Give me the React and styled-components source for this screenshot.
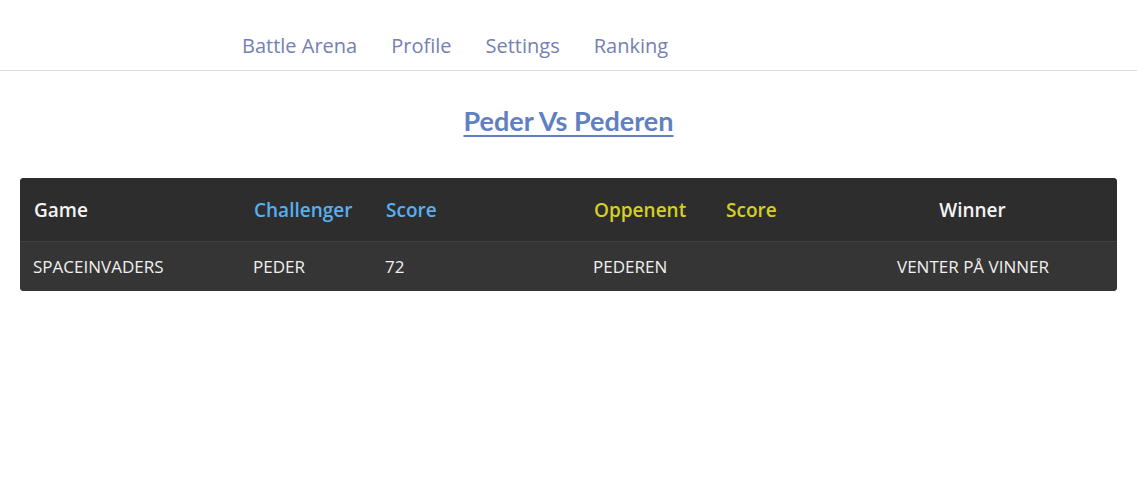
import React from "react";
import styled, { createGlobalStyle } from "styled-components";

const Global = createGlobalStyle`
  html, body { margin: 0; padding: 0; background: #fff; }
  body { font-family: "Open Sans", "Liberation Sans", sans-serif; }
`;

const NavBar = styled.nav`
  display: flex;
  align-items: center;
  height: 71px;
  padding: 0 0 0 225px;
  border-bottom: 1px solid #dcdcdc;
  box-sizing: border-box;
`;

const NavLink = styled.a`
  font-family: "Open Sans", sans-serif;
  font-size: 20px;
  color: #7580b3;
  padding: 0 17px;
  text-decoration: none;
  line-height: 24px;
  margin-top: 21px;
`;

const Title = styled.h1`
  margin: 35px 0 0;
  text-align: center;
  font-family: Lato, "Open Sans", sans-serif;
  font-weight: 700;
  font-size: 27px;
  line-height: 30px;
  color: #5f80c2;
  text-decoration: underline;
  text-decoration-thickness: 2px;
  text-underline-offset: 4px;
`;

const Card = styled.div`
  margin: 42px 20px 0;
  background: #333333;
  border-radius: 4px;
  overflow: hidden;
`;

const Table = styled.table`
  width: 100%;
  border-collapse: collapse;
  table-layout: fixed;
`;

const HeadRow = styled.tr`
  background: #2d2d2d;
  height: 63px;
  border-bottom: 1px solid #414141;
`;

const BodyRow = styled.tr`
  background: #353535;
  height: 50px;
`;

const Th = styled.th`
  font-family: "Open Sans", sans-serif;
  font-weight: 600;
  font-size: 19px;
  padding-top: 2px;
  text-align: ${(p) => (p.$center ? "center" : "left")};
  padding-left: ${(p) => (p.$center ? 0 : 14)}px;
  color: ${(p) =>
    p.$tone === "blue" ? "#58aff0" : p.$tone === "yellow" ? "#d6cf26" : "#f4f4f4"};
`;

const Td = styled.td`
  font-family: "Open Sans", sans-serif;
  font-size: 17px;
  color: #f0f0f0;
  text-transform: uppercase;
  text-align: ${(p) => (p.$center ? "center" : "left")};
  padding: 0 0 0 ${(p) => (p.$center ? 0 : 13)}px;
`;

const widths = [220, 132, 208, 132, 117, 288];

export default function App() {
  return (
    <>
      <Global />
      <NavBar>
        <NavLink>Battle Arena</NavLink>
        <NavLink>Profile</NavLink>
        <NavLink>Settings</NavLink>
        <NavLink>Ranking</NavLink>
      </NavBar>
      <Title>Peder Vs Pederen</Title>
      <Card>
        <Table>
          <colgroup>
            {widths.map((w, i) => (
              <col key={i} style={{ width: w }} />
            ))}
          </colgroup>
          <thead>
            <HeadRow>
              <Th>Game</Th>
              <Th $tone="blue">Challenger</Th>
              <Th $tone="blue">Score</Th>
              <Th $tone="yellow">Oppenent</Th>
              <Th $tone="yellow">Score</Th>
              <Th $center>Winner</Th>
            </HeadRow>
          </thead>
          <tbody>
            <BodyRow>
              <Td>spaceinvaders</Td>
              <Td>Peder</Td>
              <Td>72</Td>
              <Td>Pederen</Td>
              <Td></Td>
              <Td $center>Venter på vinner</Td>
            </BodyRow>
          </tbody>
        </Table>
      </Card>
    </>
  );
}
